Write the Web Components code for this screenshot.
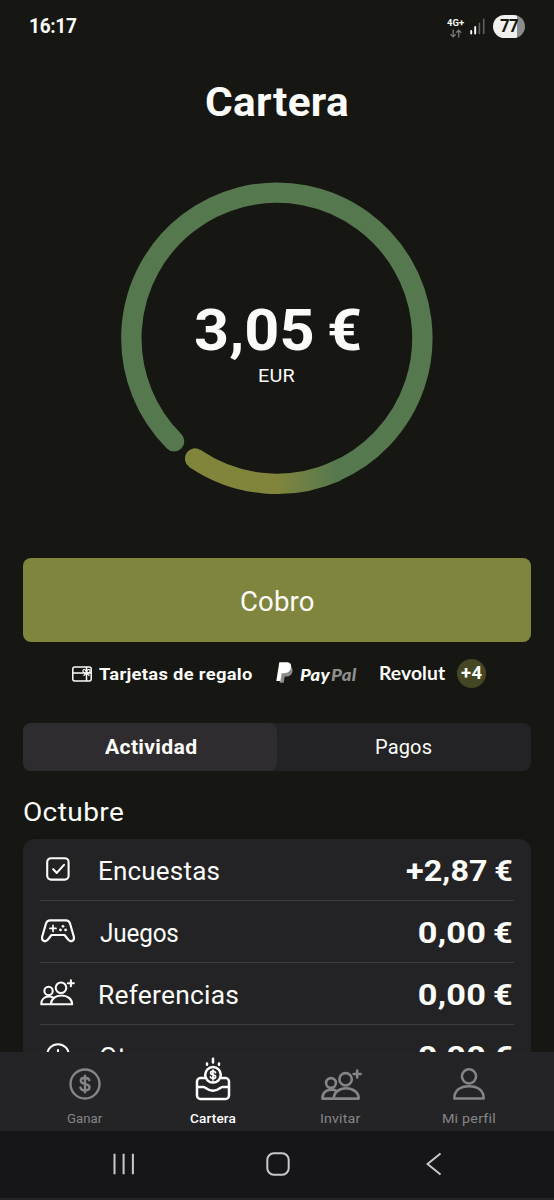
<!DOCTYPE html>
<html lang="es">
<head>
<meta charset="utf-8">
<title>Cartera</title>
<style>
html,body{margin:0;padding:0;background:#161613;}
body{width:554px;height:1200px;overflow:hidden;font-family:Roboto,"Noto Sans",sans-serif;color:#fbfbf8;}
</style>
</head>
<body>
<wallet-app></wallet-app>
<script>
const define = (name, html, ready) => {
  const t = document.createElement('template');
  t.innerHTML = html;
  customElements.define(name, class extends HTMLElement {
    connectedCallback() {
      if (this.shadowRoot) return;
      this.attachShadow({ mode: 'open' }).append(t.content.cloneNode(true));
      if (ready) ready(this, this.shadowRoot);
    }
  });
};

/* A line of text whose inked width is set by the "w" attribute. */
const ctx = document.createElement('canvas').getContext('2d');
define('fit-text', `<style>
  :host{display:block;flex:none;white-space:pre;line-height:1.2;}
  span{display:inline-block;transform-origin:0 50%;}
</style><span><slot></slot></span>`, (el, root) => {
  const size = +el.getAttribute('size'), w = +el.getAttribute('w');
  const weight = el.getAttribute('weight') || 400;
  const family = el.getAttribute('family') || 'Roboto';
  const style = el.getAttribute('slant') || 'normal';
  const text = el.textContent;
  ctx.font = `${style} ${weight} ${size}px "${family}", sans-serif`;
  const m = ctx.measureText(text);
  const spaces = text.includes('€') ? -size * 0.05 : 0;
  const ink = m.actualBoundingBoxLeft + m.actualBoundingBoxRight + spaces;
  const scale = Math.pow(w / ink, text.includes('€') ? 0.95 : 0.75);
  const gap = (w / scale - ink) / Math.max(1, text.length - 1);
  el.style.cssText += `;width:${w}px;height:${size * 1.2}px;font:${style} ${weight} ${size}px/1.2 "${family}",sans-serif`;
  const s = root.querySelector('span');
  s.style.letterSpacing = gap + 'px';
  s.style.wordSpacing = spaces + 'px';
  s.style.transform = `translateX(${m.actualBoundingBoxLeft * scale}px) scaleX(${scale})`;
});

const people = `<g fill="none" stroke="currentColor" stroke-linejoin="round" stroke-linecap="round">
  <circle cx="10" cy="14" r="4.9"/><circle cx="24.6" cy="10.3" r="6.2"/>
  <path d="M12.8 29.6c0-6.2 5.3-10.3 12.3-10.3s12.6 4.1 12.6 10.3zM12.8 29.6H1.4c0-5.5 3.6-9 9-9 1.9 0 3.6.4 5 1.2M36.2 1.5v7M32.7 5h7"/></g>`;
const icons = {
  survey: ['0 0 24 24', 24, 24, `<g fill="none" stroke="currentColor" stroke-width="2.1" stroke-linecap="round" stroke-linejoin="round"><rect x="1.2" y="1.2" width="21.4" height="21.4" rx="3.8"/><path d="M7.2 12.2l3.6 3.7 7.2-8"/></g>`],
  game: ['0 0 34 24', 34, 24, `<g fill="none" stroke="currentColor" stroke-width="2.200" stroke-linecap="round" stroke-linejoin="round"><path d="M9.2 1.4h15.6c2.3 0 3.5 1 4.2 3.1l3.7 12.7c1.2 4.6-2.7 6.5-5.4 3.6L23.5 16h-13l-3.8 4.8c-2.7 2.9-6.6 1-5.4-3.6L5 4.500c.7-2.100 1.900-3.100 4.200-3.100z"/><path d="M12 6.400v6M9 9.400h6" stroke-width="1.700"/></g><g fill="currentColor"><circle cx="22" cy="7.300" r="1.400"/><circle cx="19.500" cy="10.900" r="1.400"/><circle cx="24.600" cy="10.900" r="1.400"/></g>`],
  people: ['0 0 41 32', 35, 27.3, `<g stroke-width="2.4">${people}</g>`],
  invite: ['0 0 41 32', 41, 32, `<g stroke-width="2.6">${people}</g>`],
  other: ['0 0 24 24', 24, 24, `<g fill="none" stroke="currentColor" stroke-width="2.1" stroke-linecap="round"><circle cx="12" cy="12" r="10.800"/><path d="M12 7v10M7 12h10"/></g>`],
  coin: ['0 0 32 32', 32, 32, `<g fill="none" stroke="currentColor" stroke-width="2.4" stroke-linecap="round"><circle cx="16" cy="16" r="14.500"/><path d="M20.300 12.200c-.6-1.700-2.300-2.500-4.300-2.500-2.500 0-4.200 1.200-4.200 3 0 4.500 8.700 2 8.700 6.600 0 1.900-1.800 3.100-4.500 3.100-2.300 0-4.100-1-4.600-2.800M16 7.800v16.500"/></g>`],
  wallet: ['0 0 36 44', 36, 44, `<g fill="none" stroke="currentColor" stroke-width="2.500" stroke-linecap="round" stroke-linejoin="round"><path d="M10 21H5.400A3.500 3.500 0 0 0 2 24.500v14A3.500 3.500 0 0 0 5.400 42h25.200a3.500 3.500 0 0 0 3.400-3.500v-14A3.500 3.500 0 0 0 30.600 21H26M2 30h6.500c2.500 0 3.500 3.700 9.500 3.700s7-3.700 9.500-3.700H34"/><circle cx="18" cy="17.800" r="7.800"/><path d="M18 1.700v3.800M12 6.500v1.300M24 6.500v1.300"/><path d="M20.500 15.600c-.4-1-1.400-1.400-2.500-1.400-1.500 0-2.400.7-2.400 1.700 0 2.600 5 1.200 5 3.800 0 1.100-1.100 1.800-2.600 1.800-1.300 0-2.400-.6-2.600-1.600M18 13v10" stroke-width="1.700"/></g>`],
  user: ['0 0 34 34', 34, 34, `<g fill="none" stroke="currentColor" stroke-width="2.500" stroke-linejoin="round"><circle cx="17" cy="9.300" r="7.100"/><path d="M2.300 31.500c0-8 6-12.300 14.700-12.300s14.700 4.300 14.700 12.300z"/></g>`],
  gift: ['0 0 20 16', 20, 16, `<g fill="none" stroke="currentColor" stroke-width="1.500" stroke-linejoin="round"><rect x=".8" y="1" width="18.400" height="14" rx="2"/><path d="M1 7h18M14.500 1v14"/><path d="M14.500 7c-3 .1-4-1.300-3.400-2.800.7-1.500 3.300-.6 3.400 2.800.1-3.400 2.700-4.300 3.400-2.800.6 1.500-.4 2.900-3.400 2.800zM14.500 7l-3 2.800M14.500 7l3 2.800" stroke-width="1.200"/></g>`],
  paypal: ['0 0 17 21', 17, 21, `<path fill="#8c8c8c" d="M14.900 5c1.800 1.300 2 3.200 1.400 5.200-.9 3.100-3.200 4.400-6.300 4.400H8.700L7.700 20.700H3.700L5.500 9z"/><path fill="#fff" d="M3.300.3h6.900c3.600 0 5.500 1.800 4.900 5.200-.7 4-3.500 5.700-7.300 5.700H5.700L4.500 19H.3z"/>`],
  arrows: ['0 0 12 9', 12, 9, `<g fill="none" stroke="#777775" stroke-width="1.300"><path d="M3.200.5v7.300M.6 5.300l2.600 2.600 2.500-2.600M8.700 8.500V1.200M6.100 3.700l2.600-2.600 2.500 2.600"/></g>`],
  signal: ['0 0 15 17', 15, 17, `<g stroke-width="1.900" stroke-linecap="round"><path stroke="#fff" d="M1.200 13v2.500M5.200 9v6.500"/><path stroke="#60605e" stroke-width="1.600" d="M9.400 5.200v10.300M13.700 1.200v14.300"/></g>`],
  recents: ['0 0 22 22', 22, 22, `<path d="M1.500.7v20.600M10.600.7v20.600M19.900.7v20.600" stroke="currentColor" stroke-width="2"/>`],
  home: ['0 0 24 24', 24, 24, `<rect x="1.300" y="1.300" width="21.400" height="21.400" rx="6.500" fill="none" stroke="currentColor" stroke-width="2"/>`],
  back: ['0 0 16 24', 16, 24, `<path d="M14.500 1.500L1.500 12l13 10.500" fill="none" stroke="currentColor" stroke-width="2"/>`]
};
define('ui-icon', `<style>:host{display:block;flex:none}svg{display:block}</style><div></div>`, (el, root) => {
  const [vb, w, h, body] = icons[el.getAttribute('name')];
  root.querySelector('div').innerHTML = `<svg viewBox="${vb}" width="${w}" height="${h}">${body}</svg>`;
});

define('status-bar', `<style>
  :host{display:flex;height:53px;align-items:center;padding:0 29px 0 30px;justify-content:space-between}
  .r{display:flex;align-items:center}
  .net{display:flex;flex-direction:column;align-items:center;gap:0;margin-right:6px;padding-top:2px}
  .bat{width:32px;height:23px;border-radius:12px;background:linear-gradient(90deg,#f0f0ee 76%,#8c8c8a 76%);color:#161613;display:flex;align-items:center;justify-content:center;margin-left:8px}
</style>
<fit-text size="20.800" weight="700" w="47">16:17</fit-text>
<div class="r"><div class="net"><fit-text size="9.300" weight="700" w="17">4G+</fit-text><ui-icon name="arrows"></ui-icon></div>
<ui-icon name="signal"></ui-icon><div class="bat"><fit-text size="18.500" weight="700" w="18">77</fit-text></div></div>`);

define('balance-ring', `<style>
  :host{display:grid;width:314px;height:314px;margin:54px auto 0}
  svg,div{grid-area:1/1}
  div{display:flex;flex-direction:column;align-items:center;padding-top:115px}
</style>
<svg viewBox="0 0 314 314" width="314" height="314" fill="none" stroke-width="20.400">
 <defs><linearGradient id="g" gradientUnits="userSpaceOnUse" x1="157" y1="0" x2="217" y2="0"><stop stop-color="#81853c"/><stop offset="1" stop-color="#56784e"/></linearGradient></defs>
 <path d="M54.100 260.200A145.500 145.500 0 1 1 214 291" stroke="#56784e" stroke-linecap="round"/>
 <path d="M75 277.500A145.500 145.500 0 0 0 217 289.900" stroke="url(#g)"/>
 <path d="M75 277.500l.1.070" stroke="#81853c" stroke-linecap="round"/>
</svg>
<div><fit-text size="57.500" weight="700" w="165">3,05 €</fit-text><fit-text class="eur" size="19" w="36">EUR</fit-text></div>`);

define('cash-button', `<style>
  :host{display:block;margin:63px 23px 0}
  button{all:unset;box-sizing:border-box;width:100%;height:84px;border-radius:8px;background:#7f853c;display:flex;align-items:center;justify-content:center;padding-top:5px}
</style><button><fit-text size="27" w="73">Cobro</fit-text></button>`);

define('pay-methods', `<style>
  :host{display:flex;height:30px;align-items:center;margin-top:17px;padding-left:72px}
  .g{margin-left:7px;padding-top:2px}.p{margin-left:24px;margin-top:-2px}.pp{display:flex;margin-left:7px;padding-top:1px}.a{color:#8e8e8c}
  .r{margin-left:23px}
  .more{width:29px;height:29px;border-radius:50%;background:#454624;display:flex;align-items:center;justify-content:center;margin-left:12px}
</style>
<ui-icon name="gift"></ui-icon><fit-text class="g" size="16.500" weight="700" w="153">Tarjetas de regalo</fit-text>
<ui-icon class="p" name="paypal"></ui-icon>
<div class="pp"><fit-text size="17.500" weight="900" family="Lato" slant="italic" w="31">Pay</fit-text><fit-text class="a" size="17.500" weight="900" family="Lato" slant="italic" w="26">Pal</fit-text></div>
<fit-text class="r" size="19" weight="700" family="Lato" w="65">Revolut</fit-text>
<div class="more"><fit-text size="17.500" weight="700" w="21">+4</fit-text></div>`);

define('tab-switch', `<style>
  :host{display:grid;grid-template-columns:1fr 1fr;height:48px;margin:34px 23px 0;border-radius:8px;background:#232325}
  div{box-sizing:border-box;display:flex;align-items:center;justify-content:center;border-radius:8px;padding-top:3px}
  .on{background:#2f2c30}
</style><div class="on"><fit-text size="19.500" weight="700" w="91">Actividad</fit-text></div><div><fit-text size="19.500" w="56">Pagos</fit-text></div>`);

define('activity-row', `<style>
  :host{display:grid;grid-template-columns:35px 1fr auto;column-gap:24px;height:61px;align-items:center;border-bottom:1px solid #3c3c3e;padding-right:2px}
  .i{display:flex;justify-content:center;padding-bottom:1px}
  .t{padding:5px 0 0 1px}
  .v{padding-top:4px}
</style><div class="i"><slot name="icon"></slot></div><div class="t"><slot></slot></div><div class="v"><slot name="amount"></slot></div>`);

define('activity-card', `<style>
  :host{display:block;flex:1;min-height:0;overflow:hidden;margin:0 23px;padding:0 17px;border-radius:12px 12px 0 0;background:#232325}
</style><slot></slot>`);

define('nav-item', `<style>
  :host{display:flex;flex-direction:column;align-items:center;justify-content:flex-end;width:128px;height:78px;color:#858587}
  :host([on]){color:#fff}
  .l{margin-top:var(--gap,11px);padding-bottom:4px}
</style><slot name="icon"></slot><div class="l"><slot></slot></div>`);

define('tab-bar', `<style>
  :host{display:flex;height:79px;background:#242426;justify-content:center;padding-left:0}
  .b{--gap:9.500px}
</style>
<nav-item><ui-icon slot="icon" name="coin"></ui-icon><fit-text size="12.800" w="36">Ganar</fit-text></nav-item>
<nav-item on class="b"><ui-icon slot="icon" name="wallet"></ui-icon><fit-text size="12.800" weight="500" w="46">Cartera</fit-text></nav-item>
<nav-item class="b"><ui-icon slot="icon" name="invite"></ui-icon><fit-text size="12.800" w="40">Invitar</fit-text></nav-item>
<nav-item class="b"><ui-icon slot="icon" name="user"></ui-icon><fit-text size="12.800" w="52">Mi perfil</fit-text></nav-item>`);

define('system-bar', `<style>
  :host{display:flex;box-sizing:border-box;height:69px;background:#161618;border-bottom:2px solid #242426;align-items:center;color:#c9c9cb;padding:0 112px 2px 113px;justify-content:space-between}
  .h{margin-right:5px}
</style><ui-icon name="recents"></ui-icon><ui-icon class="h" name="home"></ui-icon><ui-icon name="back"></ui-icon>`);

define('wallet-app', `<style>
  :host{display:flex;flex-direction:column;width:554px;height:1200px;background:#161613;overflow:hidden}
  main{flex:1;min-height:0;display:flex;flex-direction:column;overflow:hidden}
  main>*{flex-shrink:0}
  main>activity-card{flex-shrink:1}
  .title{margin:25px auto 0}
  .month{margin:26px 0 0 24px;padding-bottom:11px}
</style>
<status-bar></status-bar>
<main>
 <fit-text class="title" size="40.500" weight="700" w="142">Cartera</fit-text>
 <balance-ring></balance-ring>
 <cash-button></cash-button>
 <pay-methods></pay-methods>
 <tab-switch></tab-switch>
 <fit-text class="month" size="26" w="99">Octubre</fit-text>
 <activity-card>
  <activity-row><ui-icon slot="icon" name="survey"></ui-icon><fit-text size="25" w="119">Encuestas</fit-text><fit-text slot="amount" size="29" weight="700" w="106">+2,87 €</fit-text></activity-row>
  <activity-row><ui-icon slot="icon" name="game"></ui-icon><fit-text size="25" w="78">Juegos</fit-text><fit-text slot="amount" size="29" weight="700" w="93">0,00 €</fit-text></activity-row>
  <activity-row><ui-icon slot="icon" name="people"></ui-icon><fit-text size="25" w="138">Referencias</fit-text><fit-text slot="amount" size="29" weight="700" w="93">0,00 €</fit-text></activity-row>
  <activity-row><ui-icon slot="icon" name="other"></ui-icon><fit-text size="25" w="64">Otros</fit-text><fit-text slot="amount" size="29" weight="700" w="93">0,00 €</fit-text></activity-row>
 </activity-card>
</main>
<tab-bar></tab-bar>
<system-bar></system-bar>`);
</script>
</body>
</html>
